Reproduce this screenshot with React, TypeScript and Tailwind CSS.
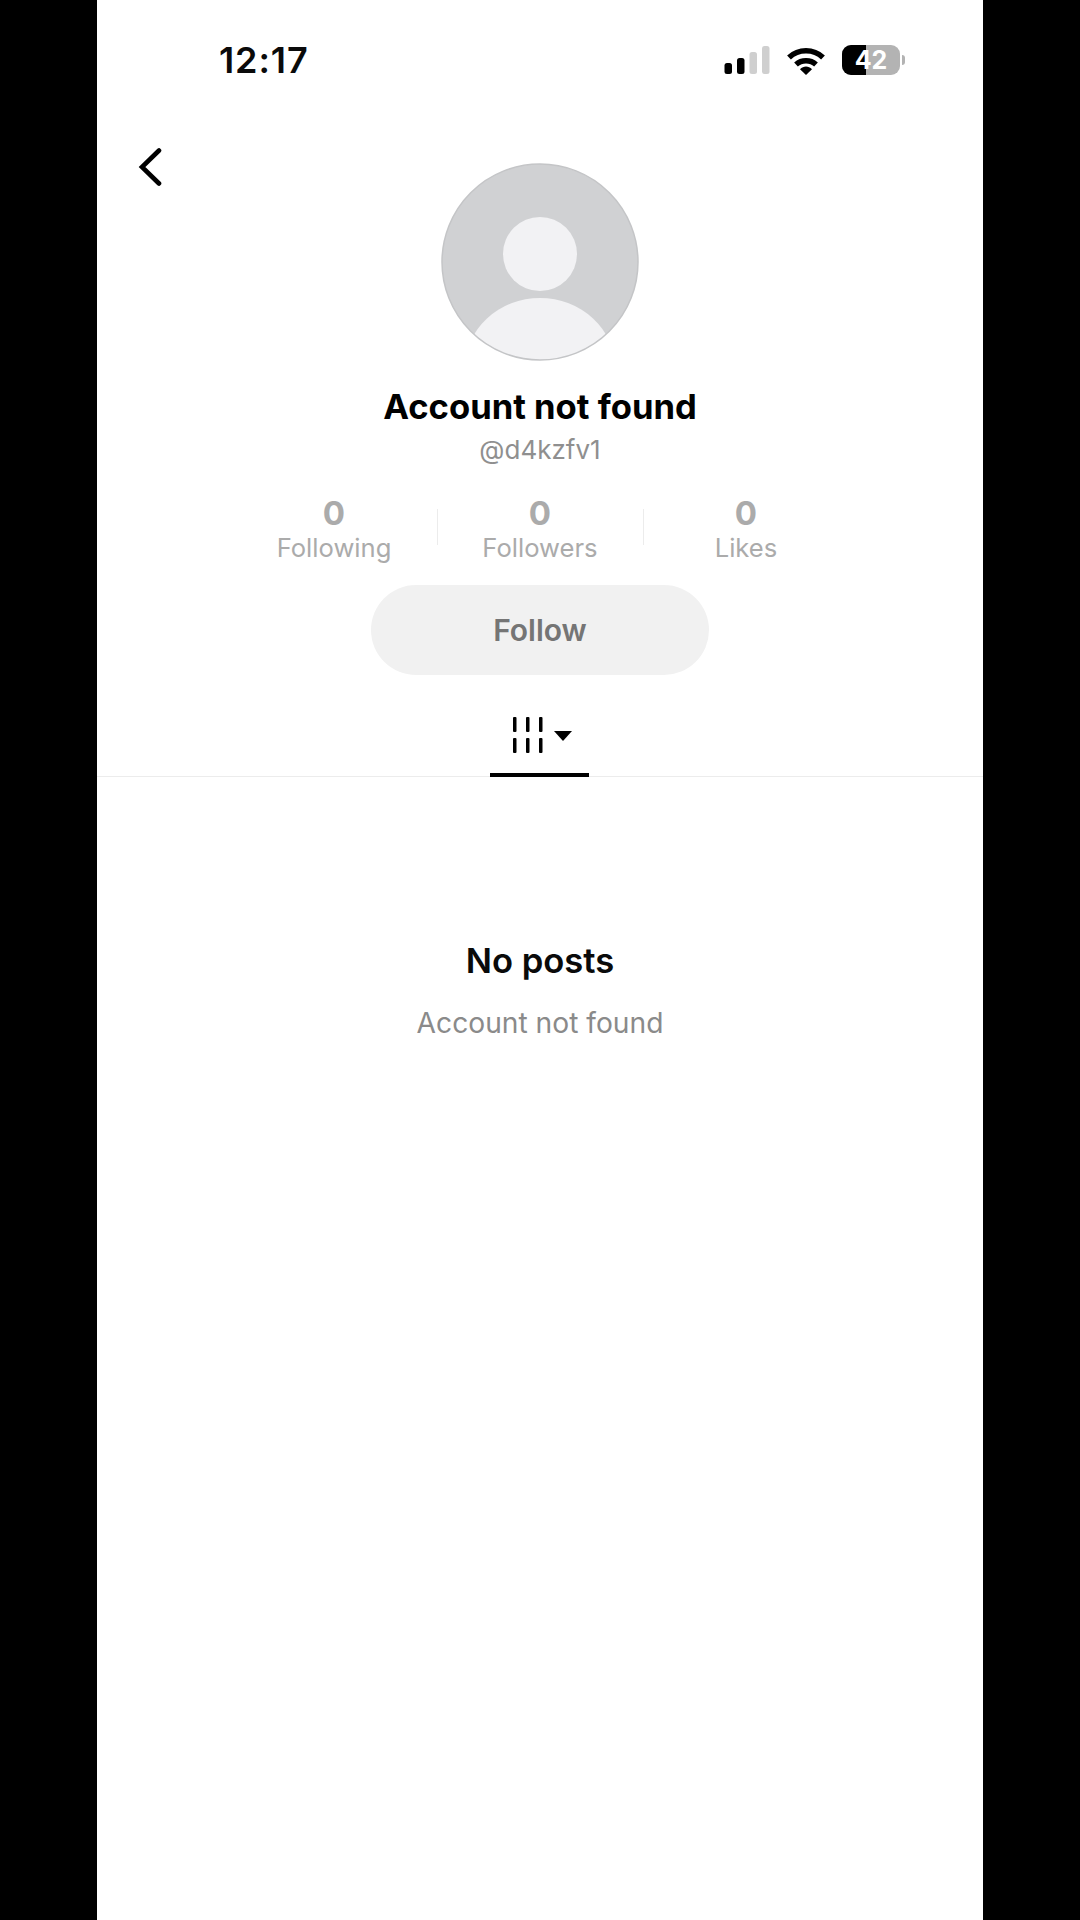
const font = { fontFamily: 'Inter, "Liberation Sans", sans-serif' }

// Status bar icons
const Signal = () => (
  <svg className="ml-[1px]" width="46" height="30" viewBox="0 0 46 30">
    <rect x="0.5" y="18" width="7.5" height="11" rx="2.5" fill="#000" />
    <rect x="13" y="13" width="7.5" height="16" rx="2.5" fill="#000" />
    <rect x="25.5" y="7" width="7.5" height="22" rx="2.5" fill="#cfcfcf" />
    <rect x="38" y="1" width="7.5" height="28" rx="2.5" fill="#cfcfcf" />
  </svg>
)

const Wifi = () => (
  <svg width="40" height="30" viewBox="0 0 40 30" fill="none">
    <path d="M3 12.5C12.5 3.5 27.5 3.5 37 12.5" stroke="#000" strokeWidth="5.5" strokeLinecap="butt" />
    <path d="M10 19.5C15.5 14.5 24.5 14.5 30 19.5" stroke="#000" strokeWidth="5.5" />
    <path d="M14 24.2C17.5 20.5 22.5 20.5 26 24.2L20 30Z" fill="#000" />
  </svg>
)

const Battery = () => (
  <div className="flex items-center gap-[2px]">
    <div className="relative flex h-[30px] w-[58px] items-center justify-center overflow-hidden rounded-[9px] bg-[#b3b3b3]">
      <div className="absolute inset-y-0 left-0 w-[24px] bg-black" />
      <span className="relative text-[25px] font-bold leading-none text-white">42</span>
    </div>
    <div className="h-[10px] w-[3px] rounded-r-full bg-[#b3b3b3]" />
  </div>
)

const BackIcon = () => (
  <svg className="-mt-[16px] ml-[41px]" width="24" height="40" viewBox="0 0 24 40" fill="none">
    <path d="M21 3.5L4 20L21 36.5" stroke="#000" strokeWidth="4.6" strokeLinecap="round" strokeLinejoin="miter" />
  </svg>
)

const Avatar = () => (
  <svg width="198" height="198" viewBox="0 0 198 198">
    <defs>
      <clipPath id="avatar-clip">
        <circle cx="99" cy="99" r="98" />
      </clipPath>
    </defs>
    <circle cx="99" cy="99" r="98" fill="#d0d1d3" />
    <g clipPath="url(#avatar-clip)">
      <circle cx="99" cy="91" r="37" fill="#f2f2f4" />
      <ellipse cx="99" cy="205" rx="75" ry="70" fill="#f2f2f4" />
    </g>
    <circle cx="99" cy="99" r="98" fill="none" stroke="#c4c5c7" strokeWidth="1.5" />
  </svg>
)

const GridIcon = () => (
  <svg width="32" height="36" viewBox="0 0 32 36" fill="#000">
    <rect x="1" y="0" width="3.5" height="15" rx="1" />
    <rect x="14" y="0" width="3.5" height="15" rx="1" />
    <rect x="27" y="0" width="3.5" height="15" rx="1" />
    <rect x="1" y="21" width="3.5" height="15" rx="1" />
    <rect x="14" y="21" width="3.5" height="15" rx="1" />
    <rect x="27" y="21" width="3.5" height="15" rx="1" />
  </svg>
)

const stats = ['Following', 'Followers', 'Likes']

export default function App() {
  return (
    <div className="flex h-[1920px] w-[1080px] justify-center bg-black" style={font}>
      <div className="flex w-[886px] flex-col bg-white">
        {/* Status bar */}
        <div className="flex h-[120px] items-center justify-between pl-[122px] pr-[78px]">
          <span className="text-[36px] font-semibold leading-none tracking-[0.9px] text-[#0a0a0a]">12:17</span>
          <div className="flex items-center gap-[16px]">
            <Signal />
            <Wifi />
            <Battery />
          </div>
        </div>

        {/* Header */}
        <div className="grid h-[240px] grid-cols-[1fr_198px_1fr] items-start pt-[43px]">
          <BackIcon />
          <Avatar />
        </div>

        <div className="flex flex-col items-center">
          <h1 className="mt-[24px] text-[34.6px] font-bold leading-[44px] text-black">Account not found</h1>
          <p className="mt-[5px] text-[26px] leading-[34px] text-[#8f8f8f]">@d4kzfv1</p>

          {/* Stats */}
          <div className="mt-[28px] grid w-[618px] grid-cols-3">
            {stats.map((label, i) => (
              <div key={label} className="relative flex flex-col items-center">
                <span className="text-[33px] font-bold leading-[36px] text-[#ababab]">0</span>
                <span className="text-[25.6px] leading-[34px] text-[#ababab]">{label}</span>
                {i < 2 && <div className="absolute -right-[1px] top-[14px] h-[36px] w-px bg-[#ececec]" />}
              </div>
            ))}
          </div>

          <button className="mt-[20px] flex h-[90px] w-[338px] items-center justify-center rounded-full bg-[#f1f1f1] text-[30px] font-semibold text-[#757575]">
            Follow
          </button>

          {/* Tab */}
          <div className="mt-[42px] flex items-start gap-[10px] pl-[3px]">
            <GridIcon />
            <div className="mt-[14px] h-0 w-0 border-x-[9px] border-t-[10px] border-x-transparent border-t-black" />
          </div>
        </div>

        <div className="mt-[20px] flex h-[4px] justify-center border-b border-[#ececec]">
          <div className="-ml-[1px] h-[4px] w-[99px] bg-black" />
        </div>

        <div className="flex flex-col items-center pt-[161px]">
          <h2 className="text-[34.6px] font-semibold leading-[44px] text-[#0a0a0a]">No posts</h2>
          <p className="mt-[19px] text-[28.2px] leading-[44px] text-[#8a8a8a]">Account not found</p>
        </div>
      </div>
    </div>
  )
}
